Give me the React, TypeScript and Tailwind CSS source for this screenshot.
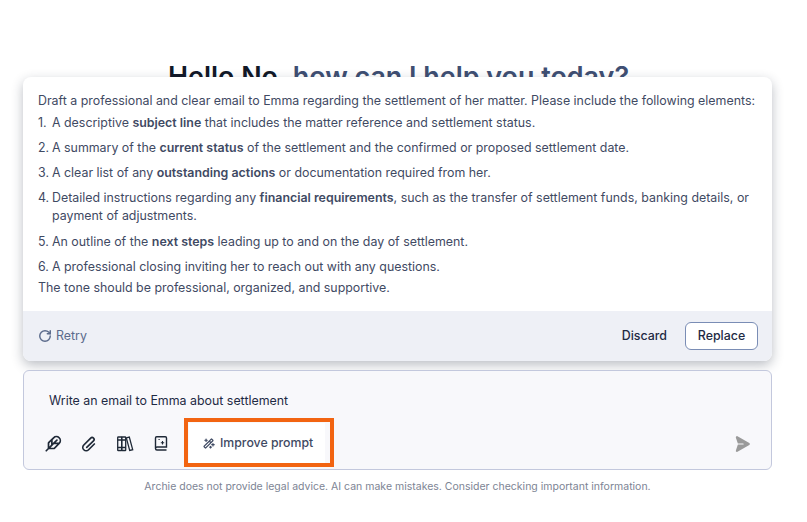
import { RotateCw } from 'lucide-react';
import { PiFeatherBold, PiMagicWandBold, PiPaperPlaneRightFill, PiPaperclipBold } from 'react-icons/pi';

const font = "font-['Inter','Noto_Sans',sans-serif]";

const steps = [
  <>A descriptive <b className="font-semibold">subject line</b> that includes the matter reference and settlement status.</>,
  <>A summary of the <b className="font-semibold">current status</b> of the settlement and the confirmed or proposed settlement date.</>,
  <>A clear list of any <b className="font-semibold">outstanding actions</b> or documentation required from her.</>,
  <>Detailed instructions regarding any <b className="font-semibold">financial requirements</b>, such as the transfer of settlement funds, banking details, or payment of adjustments.</>,
  <>An outline of the <b className="font-semibold">next steps</b> leading up to and on the day of settlement.</>,
  <>A professional closing inviting her to reach out with any questions.</>,
];

function BookSparkle() {
  return (
    <svg width="18" height="18" viewBox="0 0 18 18" fill="none" stroke="#1f2937" strokeWidth="1.4">
      <path d="M3.500 13.500V3A1.200 1.200 0 0 1 4.700 1.800h8.600A1.200 1.200 0 0 1 14.500 3v9H5A1.500 1.500 0 0 0 3.500 13.500 1.500 1.500 0 0 0 5 15h9.500" />
      <path d="M10.500 6v3.500M8.800 7.800h3.400" strokeWidth="1.100" />
      <path d="M6.500 4.500h1.200" strokeWidth="1.100" />
    </svg>
  );
}

function Books() {
  return (
    <svg width="18" height="18" viewBox="0 0 18 18" fill="none" stroke="#1f2937" strokeWidth="1.300">
      <rect x="1.700" y="2" width="4" height="13.500" rx="0.600" />
      <rect x="5.700" y="2" width="4" height="13.500" rx="0.600" />
      <path d="M10.300 2.800l3-0.800 3.400 12.700-3 0.800z" />
      <path d="M1.700 5h8M1.700 12.500h8" />
    </svg>
  );
}

export default function App() {
  return (
    <div className={`${font} relative h-[522px] w-[807px] overflow-hidden bg-white`}>
      <div className="flex flex-col items-center pt-[60px] pr-[10px]">
        <h1 className="whitespace-nowrap text-[26.900px] font-semibold leading-[32px] text-[#111827]">
          Hello No, <span className="text-[#3f4f73]">how can I help you today?</span>
        </h1>
      </div>

      {/* improved prompt popover */}
      <div className="absolute left-[23px] top-[77px] w-[749px] overflow-hidden rounded-lg bg-white shadow-[0_4px_12px_rgba(30,41,59,0.3)]">
        <div className="h-[234px] pl-[15px] pr-[12px] pt-[15px] text-[12.400px] leading-[18px] text-[#3f4a63]">
          <p className="whitespace-nowrap">Draft a professional and clear email to Emma regarding the settlement of her matter. Please include the following elements:</p>
          <ol className="mt-[4px] flex flex-col gap-[7px]">
            {steps.map((step, i) => (
              <li key={i} className="flex last:mt-0 [&:nth-child(4)]:mb-[1px]">
                <span className="w-[14px] shrink-0">{i + 1}.</span>
                <span>{step}</span>
              </li>
            ))}
          </ol>
          <p className="mt-[3px]">The tone should be professional, organized, and supportive.</p>
        </div>
        <div className="flex h-[50px] items-center justify-between bg-[#eef0f6] pl-[15px] pr-[14px]">
          <button className="flex items-center gap-[4px] text-[12.400px] text-[#5b6b8c]">
            <RotateCw size={14} strokeWidth={2.500} />
            Retry
          </button>
          <div className="flex items-center gap-[18px] text-[12.400px] text-[#1e2a44]">
            <button className="font-medium">Discard</button>
            <button className="h-[28px] w-[73px] rounded-md border border-[#7a8db5] bg-white font-medium">Replace</button>
          </div>
        </div>
      </div>

      {/* composer */}
      <div className="absolute left-[23px] top-[370px] h-[100px] w-[749px] rounded-md border border-[#c3c8dd] bg-[#f8f8fb]">
        <div className="pl-[25px] pt-[21px] text-[12.400px] leading-[18px] text-[#1e2a44]">Write an email to Emma about settlement</div>
        <div className="mt-[13px] flex items-center pl-[20px] pr-[20px]">
          <div className="flex items-center gap-[18px] text-[#1f2937]">
            <PiFeatherBold size={18} />
            <PiPaperclipBold size={18} />
            <Books />
            <BookSparkle />
          </div>
          <button className="ml-[19px] flex h-[41px] w-[136px] items-center gap-[5px] bg-white pl-[13px] text-[12.300px] font-medium text-[#3f4a63]">
            <PiMagicWandBold size={13} />
            Improve prompt
          </button>
          <PiPaperPlaneRightFill size={18} className="ml-auto text-[#9a9a9a]" />
        </div>
      </div>
      <div className="absolute left-[184px] top-[418px] h-[49px] w-[150px] border-4 border-[#f26411]" />

      <p className="absolute left-0 top-[480px] w-full pr-[12px] text-center text-[10.500px] leading-[14px] text-[#7d8494]">
        Archie does not provide legal advice. AI can make mistakes. Consider checking important information.
      </p>
    </div>
  );
}
